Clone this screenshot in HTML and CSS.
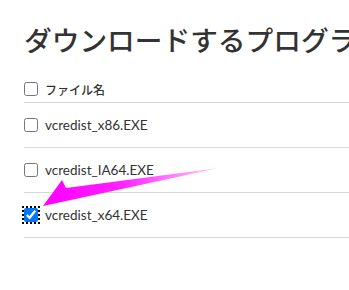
FILE: index.html
```html
<!DOCTYPE html>
<html lang="ja">
<head>
  <meta charset="UTF-8">
  <title>ダウンロードするプログラム</title>
  <link rel="stylesheet" href="styles.css">
</head>
<body>

  <div class="page">
    <h1>ダウンロードするプログラムを選択してください</h1>

    <div class="list">
      <div class="row head">
        <input type="checkbox">
        <span class="name">ファイル名</span>
      </div>
      <div class="row">
        <input type="checkbox">
        <span class="name">vcredist_x86.EXE</span>
      </div>
      <div class="row">
        <input type="checkbox">
        <span class="name">vcredist_IA64.EXE</span>
      </div>
      <div class="row">
        <input type="checkbox" class="focused" checked>
        <span class="name">vcredist_x64.EXE</span>
      </div>
    </div>
  </div>

  <svg class="arrow" width="349" height="290" viewBox="0 0 349 290">
    <defs>
      <linearGradient id="fade" x1="44" y1="0" x2="220" y2="0" gradientUnits="userSpaceOnUse">
        <stop offset="0" stop-color="#ff00ff"/>
        <stop offset="0.45" stop-color="#ff22ff"/>
        <stop offset="1" stop-color="#ffd6ff"/>
      </linearGradient>
    </defs>
    <polygon points="43,206 62,180 66,188 219,168" fill="url(#fade)"/>
  </svg>

</body>
</html>
```

FILE: styles.css
```css
html, body {
  margin: 0;
  background: #fff;
  overflow: hidden;
}
body {
  font-family: "Noto Sans CJK JP", "Noto Sans", sans-serif;
  color: #333;
  position: relative;
  width: 349px;
  height: 290px;
}
.page {
  padding: 20px 0 0 24px;
  width: 600px;
}
h1 {
  margin: 0 0 18px;
  font-size: 27.7px;
  font-weight: 500;
  line-height: 38px;
  white-space: nowrap;
  color: #333;
}
.row {
  display: flex;
  align-items: center;
  height: 44px;
  border-bottom: 1px solid #d4d8da;
}
.row.head {
  height: 26px;
}
.row input {
  width: 14px;
  height: 14px;
  margin: 0 7px 0 0;
}
.row input.focused {
  outline: 2px dotted #000;
  outline-offset: 0;
}
.name {
  font-family: Lato, "Noto Sans", sans-serif;
  font-size: 13.5px;
}
.head .name {
  font-family: "Noto Sans CJK JP", sans-serif;
  font-size: 12px;
  font-weight: 500;
}
.arrow {
  position: absolute;
  left: 0;
  top: 0;
  pointer-events: none;
}
```
